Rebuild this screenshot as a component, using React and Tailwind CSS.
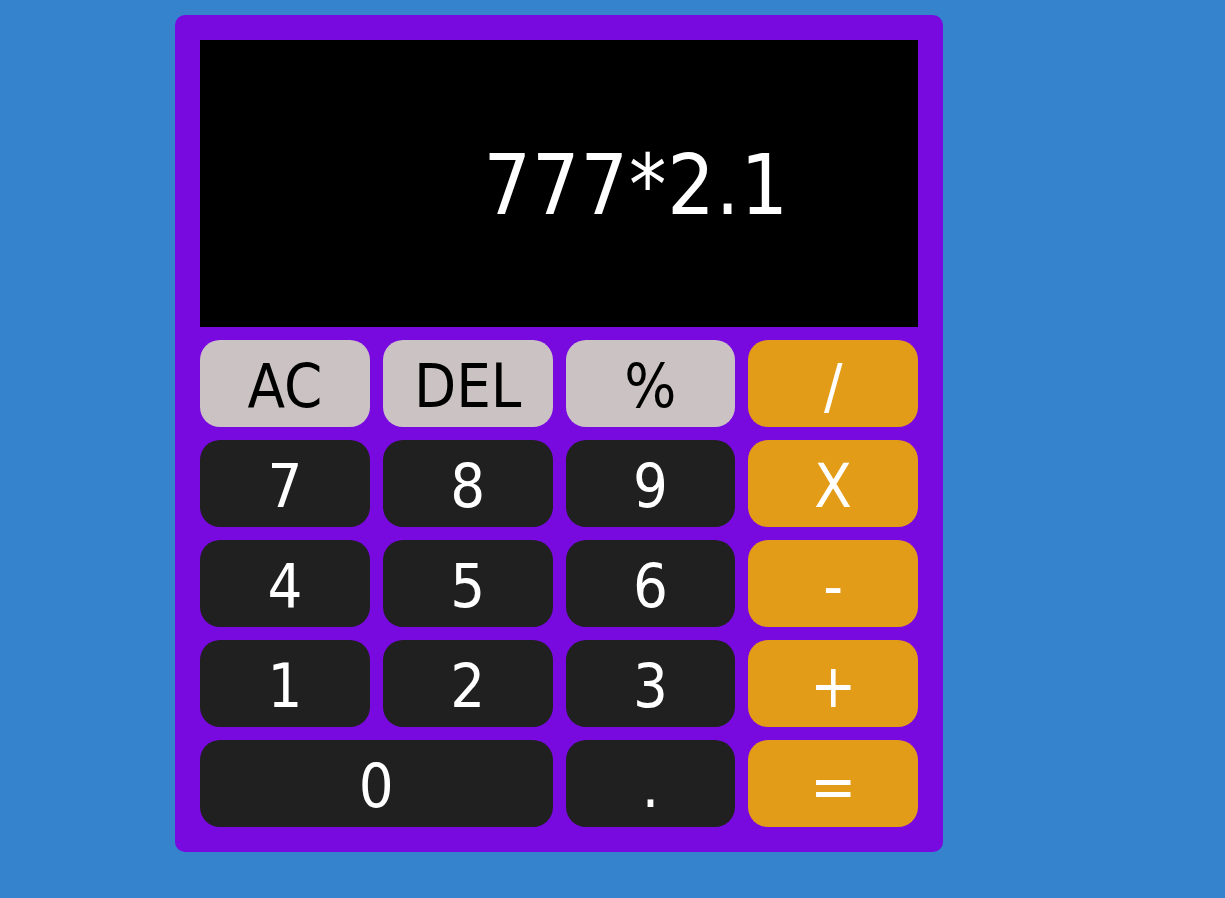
import React from "react";

const keys = [
  { label: "AC", kind: "fn" },
  { label: "DEL", kind: "fn" },
  { label: "%", kind: "fn" },
  { label: "/", kind: "op" },
  { label: "7" },
  { label: "8" },
  { label: "9" },
  { label: "X", kind: "op" },
  { label: "4" },
  { label: "5" },
  { label: "6" },
  { label: "-", kind: "op" },
  { label: "1" },
  { label: "2" },
  { label: "3" },
  { label: "+", kind: "op" },
  { label: "0", wide: true },
  { label: "." },
  { label: "=", kind: "op" },
];

function Key({ label, kind, wide }) {
  let color = "bg-[#202020] text-white";
  if (kind === "fn") color = "bg-[#cbc3c3] text-black";
  if (kind === "op") color = "bg-[#e39c17] text-white";

  return (
    <button
      className={`h-[87px] rounded-[20px] flex items-center justify-center pt-[3px] text-[61px] leading-none ${color} ${
        wide ? "col-span-2" : ""
      }`}
    >
      {label}
    </button>
  );
}

export default function App() {
  return (
    <div
      className="min-h-screen bg-[#3583cd] pl-[175px] pt-[15px]"
      style={{ fontFamily: '"DejaVu Sans Condensed", "DejaVu Sans", sans-serif' }}
    >
      <div className="w-[768px] bg-[#790adf] rounded-[10px] p-[25px]">
        {/* Display */}
        <div className="h-[287px] bg-black flex items-center justify-end pr-[129px] pt-[3px]">
          <span className="text-white text-[83px] leading-none tracking-[1px]">777*2.1</span>
        </div>

        {/* Keypad */}
        <div className="grid grid-cols-4 gap-[13px] mt-[13px]">
          {keys.map((k, i) => (
            <Key key={i} {...k} />
          ))}
        </div>
      </div>
    </div>
  );
}
